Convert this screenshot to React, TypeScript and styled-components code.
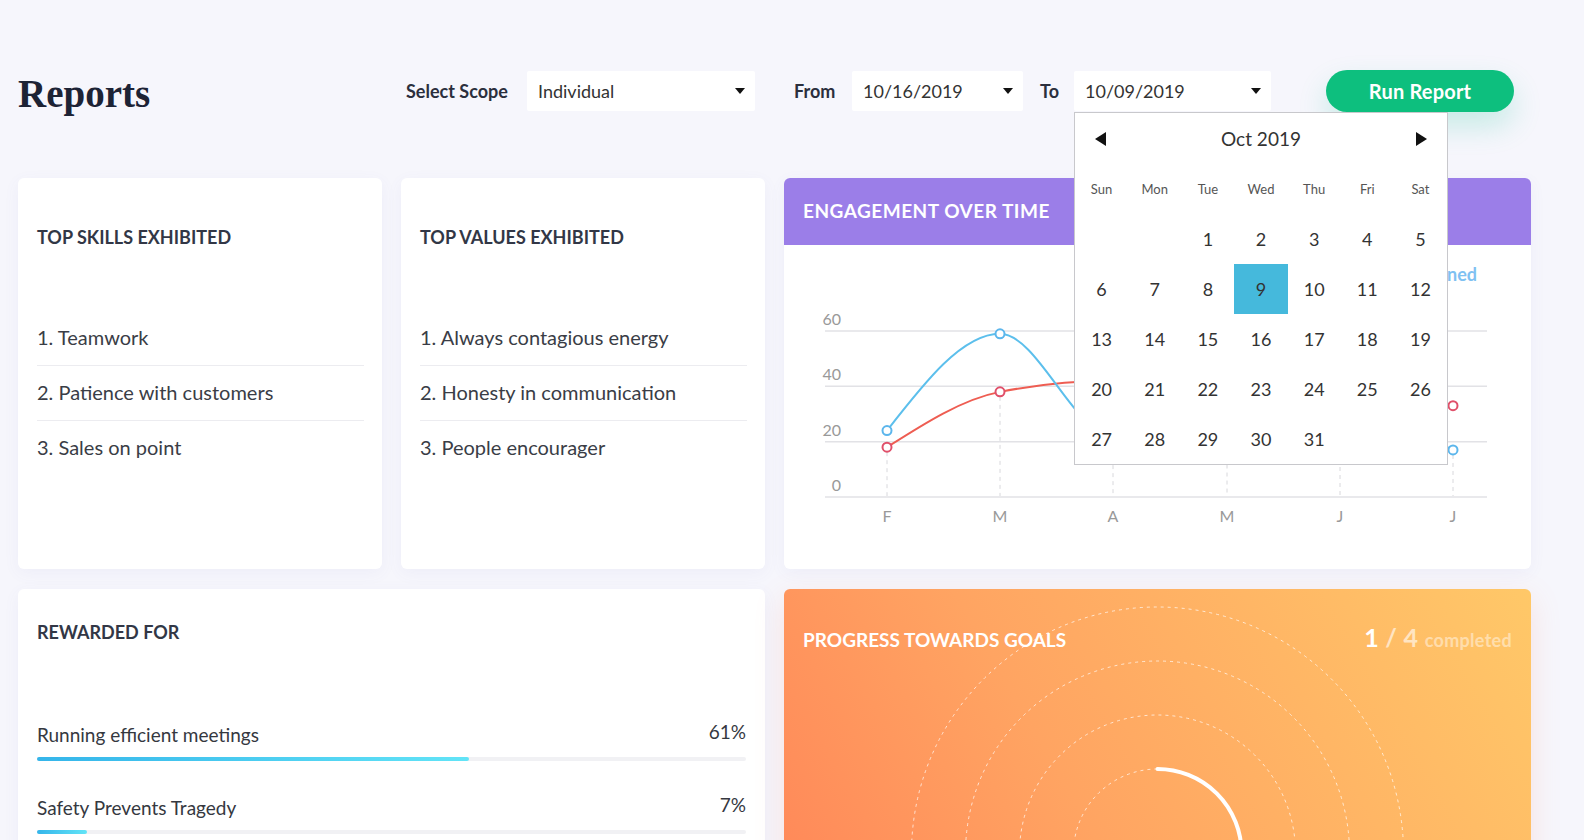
import React from "react";
import styled, { createGlobalStyle } from "styled-components";

const GlobalStyle = createGlobalStyle`
  html, body { margin: 0; padding: 0; background: #f6f6fc; }
  body { font-family: Lato, "Open Sans", sans-serif; color: #333; }
  * { box-sizing: border-box; }
`;

const Page = styled.div`
  width: 1584px;
  padding: 0 53px 0 18px;
`;

const Header = styled.header`
  display: flex;
  align-items: center;
  height: 42px;
  margin: 70px 0 66px;
`;

const Title = styled.h1`
  flex: 0 0 388px;
  margin: 0;
  padding-top: 4px;
  font-family: "Liberation Serif", "Times New Roman", serif;
  font-size: 39px;
  line-height: 1;
  font-weight: 700;
  color: #1d2335;
`;

const FieldLabel = styled.span<{ $w: number }>`
  flex: 0 0 ${(p) => p.$w}px;
  font-size: 18px;
  font-weight: 700;
  color: #2b2f3d;
`;

const SelectBox = styled.div<{ $w: number; $mr?: number }>`
  flex: 0 0 ${(p) => p.$w}px;
  width: ${(p) => p.$w}px;
  margin-right: ${(p) => p.$mr ?? 0}px;
  height: 40px;
  padding: 0 10px 0 11px;
  display: flex;
  align-items: center;
  justify-content: space-between;
  background: #fff;
  border-radius: 2px;
  font-size: 18px;
  color: #333;
`;

const Caret = styled.span`
  width: 0;
  height: 0;
  border-left: 5px solid transparent;
  border-right: 5px solid transparent;
  border-top: 6px solid #111;
`;

const DateWrap = styled.div`
  position: relative;
  flex: 0 0 197px;
  margin-right: 55px;
`;

const RunButton = styled.button`
  flex: 0 0 188px;
  height: 42px;
  border: none;
  border-radius: 21px;
  background: #0dbf7e;
  color: #fff;
  font-family: Lato, sans-serif;
  font-size: 20px;
  font-weight: 700;
  letter-spacing: 0.2px;
  box-shadow: 0 14px 30px rgba(0, 190, 140, 0.2);
  cursor: pointer;
`;

/* calendar */
const CalendarPanel = styled.div`
  position: absolute;
  top: calc(100% + 1px);
  left: 0;
  width: 374px;
  background: #fff;
  border: 1px solid #c8c8cc;
  z-index: 20;
`;

const CalHead = styled.div`
  height: 51px;
  display: flex;
  align-items: center;
  justify-content: space-between;
  padding: 0 20px;
  font-size: 19px;
  color: #333;
`;

const ArrowLeft = styled.span`
  width: 0;
  height: 0;
  border-top: 7px solid transparent;
  border-bottom: 7px solid transparent;
  border-right: 11px solid #111;
`;

const ArrowRight = styled.span`
  width: 0;
  height: 0;
  border-top: 7px solid transparent;
  border-bottom: 7px solid transparent;
  border-left: 11px solid #111;
`;

const CalGrid = styled.div`
  display: grid;
  grid-template-columns: repeat(7, 1fr);
  grid-auto-rows: 50px;
`;

const DayName = styled.div`
  display: flex;
  align-items: center;
  justify-content: center;
  font-size: 13px;
  color: #555;
`;

const DayCell = styled.div<{ $selected?: boolean }>`
  display: flex;
  align-items: center;
  justify-content: center;
  font-size: 18px;
  color: #333;
  background: ${(p) => (p.$selected ? "#45b9dc" : "transparent")};
`;

/* grid */
const Grid = styled.main`
  display: grid;
  grid-template-columns: repeat(4, 364px);
  grid-template-rows: 391px 528px;
  column-gap: 19px;
  row-gap: 20px;
`;

const Card = styled.section<{ $span?: number }>`
  grid-column: span ${(p) => p.$span ?? 1};
  background: #fff;
  border-radius: 6px;
  box-shadow: 0 4px 16px rgba(110, 100, 190, 0.06);
`;

const ListCardBox = styled(Card)`
  padding: 49px 18px 0 19px;
  display: flex;
  flex-direction: column;
`;

const CardTitle = styled.h2`
  margin: 0;
  font-size: 18px;
  line-height: 20px;
  font-weight: 700;
  color: #323746;
`;

const List = styled.ol`
  list-style: none;
  margin: 63px 0 0;
  padding: 0;
`;

const ListItem = styled.li`
  height: 55px;
  display: flex;
  align-items: center;
  padding-bottom: 2px;
  font-size: 20px;
  color: #3a3d46;
  & + & {
    border-top: 1px solid #ececf0;
  }
`;

const ChartCard = styled(Card)`
  display: flex;
  flex-direction: column;
`;

const PurpleHeader = styled.div`
  height: 67px;
  flex: 0 0 67px;
  background: #9b7ee8;
  border-radius: 6px 6px 0 0;
  display: flex;
  align-items: center;
  padding: 0 19px 2px;
  color: #fff;
  font-size: 19px;
  font-weight: 700;
  letter-spacing: 0.5px;
`;

const ChartSvg = styled.svg`
  display: block;
  font-family: Lato, sans-serif;
`;

const RewardCard = styled(Card)`
  padding: 33px 19px 0 19px;
`;

const Bars = styled.div`
  margin-top: 80px;
`;

const BarItem = styled.div`
  margin-bottom: 34px;
`;

const BarRow = styled.div`
  display: flex;
  justify-content: space-between;
  align-items: center;
  height: 24px;
  font-size: 19px;
  color: #35383f;
`;

const Pct = styled.span`
  font-size: 19px;
  padding-bottom: 6px;
`;

const Track = styled.div`
  margin-top: 11px;
  height: 4px;
  border-radius: 2px;
  background: #f1f1f4;
`;

const Fill = styled.div`
  height: 100%;
  border-radius: 2px;
  background: linear-gradient(90deg, #35b5ea, #62e4f7);
`;

const ProgressCard = styled.section`
  grid-column: span 2;
  display: grid;
  border-radius: 6px;
  overflow: hidden;
  background: linear-gradient(60deg, #ff7d55 0%, #ffa462 45%, #ffc868 100%);
  box-shadow: 0 10px 30px rgba(255, 140, 100, 0.18);
`;

const ProgressHead = styled.div`
  grid-area: 1 / 1;
  align-self: start;
  z-index: 1;
  display: flex;
  justify-content: space-between;
  align-items: baseline;
  padding: 36px 19px 0;
  line-height: 24px;
`;

const ProgressTitle = styled.h2`
  margin: 0;
  font-size: 19px;
  font-weight: 700;
  color: #fff;
`;

const Counter = styled.div`
  color: #fff;
  font-weight: 700;
`;

const CountMain = styled.span`
  font-size: 25px;
`;

const CountDim = styled.span<{ $size: number; $op: number }>`
  font-size: ${(p) => p.$size}px;
  opacity: ${(p) => p.$op};
  letter-spacing: 0.3px;
`;

const Rings = styled.svg`
  grid-area: 1 / 1;
  display: block;
`;

/* data */
const skills = ["Teamwork", "Patience with customers", "Sales on point"];
const values = ["Always contagious energy", "Honesty in communication", "People encourager"];
const rewards = [
  { label: "Running efficient meetings", pct: 61 },
  { label: "Safety Prevents Tragedy", pct: 7 },
];

const months = ["F", "M", "A", "M", "J", "J"];
const xs = [103, 216, 329, 443, 556, 669];
const blue = [24, 59, 22, 28, 30, 17];
const red = [18, 38, 42, 38, 35, 33];
const yOf = (v: number) => 252 - (v * 166) / 60;

function monotonePath(pts: [number, number][]): string {
  const n = pts.length;
  const h: number[] = [];
  const s: number[] = [];
  for (let i = 0; i < n - 1; i++) {
    h.push(pts[i + 1][0] - pts[i][0]);
    s.push((pts[i + 1][1] - pts[i][1]) / h[i]);
  }
  const t: number[] = new Array(n).fill(0);
  for (let i = 1; i < n - 1; i++) {
    const s0 = s[i - 1];
    const s1 = s[i];
    const p = (s0 * h[i] + s1 * h[i - 1]) / (h[i - 1] + h[i]);
    t[i] = (Math.sign(s0) + Math.sign(s1)) * Math.min(Math.abs(s0), Math.abs(s1), 0.5 * Math.abs(p)) || 0;
  }
  t[0] = (3 * s[0] - t[1]) / 2;
  t[n - 1] = (3 * s[n - 2] - t[n - 2]) / 2;
  let d = `M${pts[0][0]},${pts[0][1]}`;
  for (let i = 0; i < n - 1; i++) {
    const dx = h[i] / 3;
    d += ` C${pts[i][0] + dx},${pts[i][1] + dx * t[i]} ${pts[i + 1][0] - dx},${pts[i + 1][1] - dx * t[i + 1]} ${pts[i + 1][0]},${pts[i + 1][1]}`;
  }
  return d;
}

function ListCard({ title, items }: { title: string; items: string[] }) {
  return (
    <ListCardBox>
      <CardTitle>{title}</CardTitle>
      <List>
        {items.map((it, i) => (
          <ListItem key={it}>
            {i + 1}. {it}
          </ListItem>
        ))}
      </List>
    </ListCardBox>
  );
}

function Calendar() {
  const names = ["Sun", "Mon", "Tue", "Wed", "Thu", "Fri", "Sat"];
  const cells: (number | null)[] = [null, null];
  for (let d = 1; d <= 31; d++) cells.push(d);
  return (
    <CalendarPanel>
      <CalHead>
        <ArrowLeft />
        <span>Oct 2019</span>
        <ArrowRight />
      </CalHead>
      <CalGrid>
        {names.map((n) => (
          <DayName key={n}>{n}</DayName>
        ))}
        {cells.map((c, i) => (
          <DayCell key={i} $selected={c === 9}>
            {c ?? ""}
          </DayCell>
        ))}
      </CalGrid>
    </CalendarPanel>
  );
}

function EngagementChart() {
  const grid = [0, 20, 40, 60];
  const bluePts = xs.map((x, i) => [x, yOf(blue[i])] as [number, number]);
  const redPts = xs.map((x, i) => [x, yOf(red[i])] as [number, number]);
  return (
    <ChartSvg width={747} height={324} viewBox="0 0 747 324">
      <text x={693} y={36} textAnchor="end" fontSize={18} fontWeight={700} fill="#7fc1f2">
        Earned
      </text>
      {grid.map((g) => (
        <g key={g}>
          <line x1={41} x2={703} y1={yOf(g)} y2={yOf(g)} stroke="#e2e2e6" strokeWidth={1.5} />
          <text x={57} y={yOf(g) - 6} textAnchor="end" fontSize={16} fill="#999">
            {g}
          </text>
        </g>
      ))}
      {xs.map((x, i) => (
        <g key={i}>
          <line
            x1={x}
            x2={x}
            y1={Math.max(yOf(blue[i]), yOf(red[i])) + 5}
            y2={251}
            stroke="#d8d8dc"
            strokeDasharray="4 4"
          />
          <text x={x} y={277} textAnchor="middle" fontSize={16} fill="#999">
            {months[i]}
          </text>
        </g>
      ))}
      <path d={monotonePath(redPts)} fill="none" stroke="#ee5d52" strokeWidth={2} />
      <path d={monotonePath(bluePts)} fill="none" stroke="#5cbfec" strokeWidth={2} />
      {redPts.map(([x, y], i) => (
        <circle key={"r" + i} cx={x} cy={y} r={4.5} fill="#fff" stroke="#e0506a" strokeWidth={2} />
      ))}
      {bluePts.map(([x, y], i) => (
        <circle key={"b" + i} cx={x} cy={y} r={4.5} fill="#fff" stroke="#5cb6ec" strokeWidth={2} />
      ))}
    </ChartSvg>
  );
}

function ProgressRings() {
  const cx = 373.5;
  const cy = 264;
  const radii = [84, 138, 192, 246];
  const r0 = radii[0];
  return (
    <Rings width={747} height={528} viewBox="0 0 747 528">
      {radii.map((r) => (
        <circle key={r} cx={cx} cy={cy} r={r} fill="none" stroke="rgba(255,255,255,0.7)" strokeWidth={1} strokeDasharray="3 4" />
      ))}
      <path
        d={`M${cx},${cy - r0} A${r0},${r0} 0 0 1 ${cx + r0},${cy}`}
        fill="none"
        stroke="#fff"
        strokeWidth={4}
        strokeLinecap="round"
      />
    </Rings>
  );
}

export default function App() {
  return (
    <>
      <GlobalStyle />
      <Page>
        <Header>
          <Title>Reports</Title>
          <FieldLabel $w={121}>Select Scope</FieldLabel>
          <SelectBox $w={228} $mr={39}>
            Individual
            <Caret />
          </SelectBox>
          <FieldLabel $w={58}>From</FieldLabel>
          <SelectBox $w={171} $mr={17}>
            10/16/2019
            <Caret />
          </SelectBox>
          <FieldLabel $w={34}>To</FieldLabel>
          <DateWrap>
            <SelectBox $w={197}>
              10/09/2019
              <Caret />
            </SelectBox>
            <Calendar />
          </DateWrap>
          <RunButton>Run Report</RunButton>
        </Header>
        <Grid>
          <ListCard title="TOP SKILLS EXHIBITED" items={skills} />
          <ListCard title="TOP VALUES EXHIBITED" items={values} />
          <ChartCard $span={2}>
            <PurpleHeader>ENGAGEMENT OVER TIME</PurpleHeader>
            <EngagementChart />
          </ChartCard>
          <RewardCard $span={2}>
            <CardTitle>REWARDED FOR</CardTitle>
            <Bars>
              {rewards.map((r) => (
                <BarItem key={r.label}>
                  <BarRow>
                    <span>{r.label}</span>
                    <Pct>{r.pct}%</Pct>
                  </BarRow>
                  <Track>
                    <Fill style={{ width: `${r.pct}%` }} />
                  </Track>
                </BarItem>
              ))}
            </Bars>
          </RewardCard>
          <ProgressCard>
            <ProgressHead>
              <ProgressTitle>PROGRESS TOWARDS GOALS</ProgressTitle>
              <Counter>
                <CountMain>1</CountMain>
                <CountDim $size={25} $op={0.6}> / 4 </CountDim>
                <CountDim $size={18} $op={0.45}>completed</CountDim>
              </Counter>
            </ProgressHead>
            <ProgressRings />
          </ProgressCard>
        </Grid>
      </Page>
    </>
  );
}
